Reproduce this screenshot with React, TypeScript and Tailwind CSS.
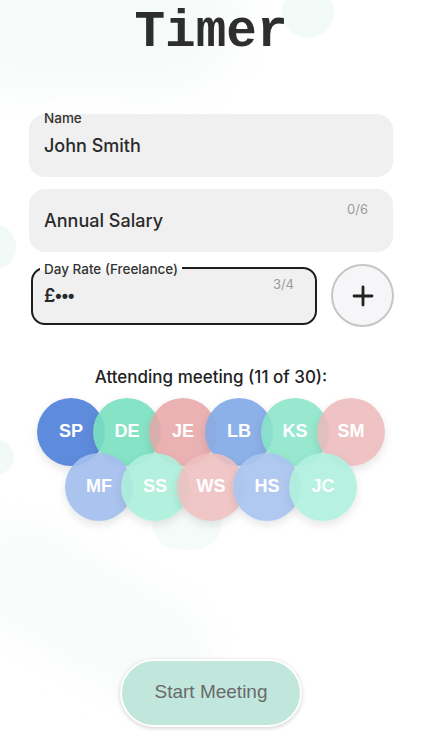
import React from "react";

const people = [
  { i: "SP", c: "bg-[rgba(86,133,218,0.95)]" },
  { i: "DE", c: "bg-[rgba(122,224,192,0.9)]" },
  { i: "JE", c: "bg-[rgba(230,165,165,0.85)]" },
  { i: "LB", c: "bg-[rgba(130,170,230,0.92)]" },
  { i: "KS", c: "bg-[rgba(138,228,200,0.88)]" },
  { i: "SM", c: "bg-[rgba(236,184,184,0.85)]" },
];

const people2 = [
  { i: "MF", c: "bg-[rgba(163,190,238,0.92)]" },
  { i: "SS", c: "bg-[rgba(172,238,218,0.9)]" },
  { i: "WS", c: "bg-[rgba(238,190,190,0.88)]" },
  { i: "HS", c: "bg-[rgba(168,196,240,0.92)]" },
  { i: "JC", c: "bg-[rgba(176,240,222,0.92)]" },
];

function Bubble({ i, c }: { i: string; c: string }) {
  return (
    <div
      className={`w-[68px] h-[68px] shrink-0 rounded-full flex items-center justify-center text-white font-bold text-[18px] shadow-[0_4px_10px_rgba(0,0,0,0.10)] ${c}`}
      style={{ fontFamily: '"Liberation Sans", Arial, sans-serif' }}
    >
      {i}
    </div>
  );
}

export default function App() {
  const sans = { fontFamily: 'Inter, "Noto Sans", sans-serif' };
  return (
    <div className="relative w-[422px] h-[750px] overflow-hidden bg-white" style={sans}>
      {/* faint background blobs */}
      <div className="absolute -left-[60px] -top-[60px] w-[300px] h-[150px] rounded-full bg-[#f6fbf9] blur-[20px]" />
      <div className="absolute left-[282px] -top-[14px] w-[52px] h-[52px] rounded-full bg-[#f3fbf8]" />
      <div className="absolute -left-[30px] top-[224px] w-[46px] h-[46px] rounded-full bg-[#f1faf6]" />
      <div className="absolute -left-[20px] top-[440px] w-[34px] h-[34px] rounded-full bg-[#f1faf6]" />
      <div className="absolute left-[152px] top-[494px] w-[70px] h-[56px] rounded-full bg-[#f4fbf8]" />
      <div className="absolute -left-[40px] top-[560px] w-[260px] h-[110px] rotate-[30deg] rounded-full bg-[#f8fcfa] blur-[16px]" />

      <div className="relative flex flex-col">
        <h1
          className="text-center font-bold text-[51px] leading-none text-[#2e2e2e] mt-[7px]"
          style={{ fontFamily: '"Liberation Mono", "Courier New", monospace' }}
        >
          Timer
        </h1>

        <div className="px-[29px] mt-[56px] flex flex-col gap-[12px]">
          <div className="relative h-[63px] rounded-[16px] bg-[#f0f0f0] flex items-center pl-[15px]">
            <span className="absolute left-[15px] -top-[6px] text-[13.5px] font-medium text-[#333]">Name</span>
            <span className="text-[18px] font-medium text-[#2a2a2a]">John Smith</span>
          </div>

          <div className="relative h-[63px] rounded-[16px] bg-[#f0f0f0] flex items-center pl-[15px]">
            <span className="absolute right-[25px] top-[11px] text-[13px] text-[#9c9c9c]">0/6</span>
            <span className="text-[18px] font-medium text-[#2a2a2a]">Annual Salary</span>
          </div>
        </div>

        <div className="pl-[31px] pr-[28px] mt-[12px] flex items-center gap-[14px]">
          <div className="relative flex-1 h-[58px] rounded-[14px] border-2 border-[#1e1e1e] bg-[#f0f0f0] flex items-center pl-[11px]">
            <span className="absolute left-[7px] -top-[10px] px-[4px] text-[13.5px] font-medium text-[#333] bg-[linear-gradient(to_bottom,#ffffff_55%,#f0f0f0_55%)]">
              Day Rate (Freelance)
            </span>
            <span className="absolute right-[21px] top-[6px] text-[13px] text-[#9c9c9c]">3/4</span>
            <span className="text-[18px] font-semibold text-[#2a2a2a]">
              £<span style={{ fontFamily: '"Liberation Sans", Arial, sans-serif' }}>•••</span>
            </span>
          </div>
          <button className="w-[63px] h-[63px] shrink-0 rounded-full border-2 border-[#c6c6c6] bg-[#f6f6f8] flex items-center justify-center">
            <svg width="22" height="22" viewBox="0 0 22 22" fill="none" stroke="#222" strokeWidth="2.8" strokeLinecap="round">
              <path d="M11 2v18M2 11h18" />
            </svg>
          </button>
        </div>

        <p className="text-center mt-[38px] text-[17px] font-medium text-[#222]">Attending meeting (11 of 30):</p>

        <div className="mt-[7px] flex justify-center -space-x-[12px]">
          {people.map((p) => (
            <Bubble key={p.i} {...p} />
          ))}
        </div>
        <div className="-mt-[13px] flex justify-center -space-x-[12px]">
          {people2.map((p) => (
            <Bubble key={p.i} {...p} />
          ))}
        </div>

        <div className="flex justify-center mt-[138px]">
          <button
            className="w-[182px] h-[68px] rounded-full bg-[#c1e6dc] border-2 border-white shadow-[0_1px_4px_rgba(0,0,0,0.2)] text-[19px] text-[#6a6a6a]"
            style={{ fontFamily: '"Liberation Sans", Arial, sans-serif' }}
          >
            Start Meeting
          </button>
        </div>
      </div>
    </div>
  );
}
